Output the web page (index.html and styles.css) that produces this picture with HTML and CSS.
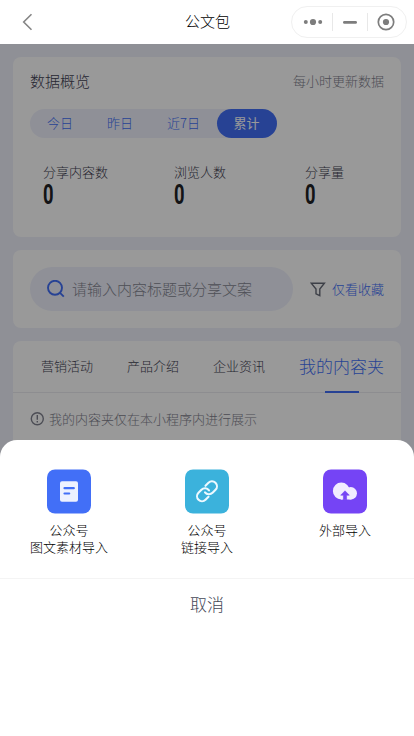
FILE: index.html
```html
<!DOCTYPE html>
<html lang="zh-CN">
<head>
<meta charset="utf-8">
<title>公文包</title>
<link rel="stylesheet" href="styles.css">
</head>
<body>
<header class="nav">
  <svg class="back" width="12" height="18" viewBox="0 0 12 18"><path d="M9.5 1.2 1.7 9l7.8 7.8"/></svg>
  <h1 class="nav-title">公文包</h1>
  <div class="capsule">
    <svg width="20" height="16" viewBox="0 0 20 16"><circle cx="2.8" cy="8" r="2"/><circle cx="10" cy="8" r="3.1"/><circle cx="17.2" cy="8" r="2"/></svg>
    <i class="sep"></i>
    <svg width="16" height="16" viewBox="0 0 16 16"><rect x="1" y="7" width="14" height="2.8" rx="1.4"/></svg>
    <i class="sep"></i>
    <svg width="18" height="18" viewBox="0 0 18 18"><circle class="ring" cx="9" cy="9" r="7.7"/><circle cx="9" cy="9" r="3.1"/></svg>
  </div>
</header>
<main class="page">
  <section class="card overview">
    <div class="card-head"><h2>数据概览</h2><span class="note">每小时更新数据</span></div>
    <div class="range"><span>今日</span><span>昨日</span><span>近7日</span><span class="on">累计</span></div>
    <div class="stats">
      <div><p>分享内容数</p><b>0</b></div>
      <div><p>浏览人数</p><b>0</b></div>
      <div><p>分享量</p><b>0</b></div>
    </div>
  </section>
  <section class="card search">
    <div class="field">
      <svg width="18" height="18" viewBox="0 0 18 18"><circle cx="8" cy="7.8" r="7"/><path d="M13 12.8 16.8 16.6"/></svg>
      <span>请输入内容标题或分享文案</span>
    </div>
    <div class="filter">
      <svg width="16" height="15" viewBox="0 0 16 15"><path d="M1.2 1.2h13.2L9.8 7v6.6L6 11.8V7z"/></svg>
      <span>仅看收藏</span>
    </div>
  </section>
  <section class="card folders">
    <nav class="tabs"><span>营销活动</span><span>产品介绍</span><span>企业资讯</span><span class="active">我的内容夹</span></nav>
    <div class="tip">
      <svg width="14" height="14" viewBox="0 0 14 14"><circle cx="7.3" cy="6.7" r="6"/><path d="M7.3 3v4.8M7.3 9v1.4"/></svg>
      <span>我的内容夹仅在本小程序内进行展示</span>
    </div>
  </section>
</main>
<div class="mask"></div>
<div class="sheet">
  <div class="actions">
    <div class="action">
      <svg width="44" height="45" viewBox="0 -.5 44 45"><rect width="44" height="44" rx="8" fill="#426ff7"/><rect x="13" y="11.7" width="18" height="20.6" rx="2" fill="#edf1ff"/><path d="M17.5 18.7h9.3M17.5 24h4.7" stroke="#426ff7" stroke-width="2.2" stroke-linecap="round"/></svg>
      <span>公众号<br>图文素材导入</span>
    </div>
    <div class="action">
      <svg width="44" height="45" viewBox="0 -.5 44 45"><rect width="44" height="44" rx="8" fill="#3bb2dc"/><g transform="translate(10 9.8)" fill="none" stroke="#edf9ff" stroke-width="2.1" stroke-linecap="round"><path d="M10 13a5 5 0 0 0 7.54.54l3-3a5 5 0 0 0-7.07-7.07l-3 3"/><path d="M14 11a5 5 0 0 0-7.54-.54l-3 3a5 5 0 0 0 7.07 7.07l3-3"/></g></svg>
      <span>公众号<br>链接导入</span>
    </div>
    <div class="action">
      <svg width="44" height="45" viewBox="0 -.5 44 45"><rect width="44" height="44" rx="8" fill="#7544f5"/><g fill="#f1ecff"><circle cx="18.3" cy="21.5" r="8.4"/><circle cx="27.8" cy="23.8" r="6.2"/><path d="M18 19h8.5l2 11H18z"/></g><path d="M22 21.3l4.3 4.4h-2.7v4.6h-3.2v-4.6h-2.7z" fill="#7544f5" stroke="#7544f5" stroke-width=".6" stroke-linejoin="round"/></svg>
      <span>外部导入</span>
    </div>
  </div>
  <div class="cancel">取消</div>
</div>
</body>
</html>
```
FILE: styles.css
```css
* { box-sizing: border-box; }
body { margin: 0; position: relative; height: 736px; overflow: hidden; font-family: "Noto Sans CJK SC", sans-serif; font-weight: 300; font-size: 13px; line-height: 17px; background: #eff0fa; color: #3f4152; }
h1, h2, p { margin: 0; font-weight: inherit; }
svg { display: block; flex: none; }
.nav { display: grid; grid-template-columns: 1fr 44px 1fr; align-items: center; height: 44px; padding: 0 7px; background: #fff; }
.back { margin-left: 15px; fill: none; stroke: #858585; stroke-width: 1.6; }
.nav-title { color: #000; font-size: 15px; line-height: 20px; padding-bottom: 2px; white-space: nowrap; }
.capsule { justify-self: end; width: 116px; height: 32px; border: 1px solid #f0f0f0; border-radius: 16px; display: flex; align-items: center; justify-content: space-between; padding: 0 11px; fill: #7d7d7d; }
.sep { width: 1px; height: 18px; background: #e8e8e8; }
.ring { fill: none; stroke: #7d7d7d; stroke-width: 1.7; }
.page { padding: 13px; display: flex; flex-direction: column; gap: 13px; }
.card { background: #fff; border-radius: 8px; }
.overview { height: 180px; padding: 13px 17px; }
.card-head { display: flex; justify-content: space-between; align-items: center; height: 21px; }
h2 { font-size: 15px; }
.note { color: #7f818e; }
.range { display: flex; width: 247px; height: 29px; margin-top: 18px; border-radius: 15px; background: #eff1fc; color: #426ff7; line-height: 27px; text-align: center; }
.range span { flex: 0 0 60px; height: 29px; }
.range span:nth-child(3) { flex-basis: 67px; }
.range .on { background: #426ff7; color: #fff; border-radius: 15px; font-weight: 400; text-indent: -1px; }
.stats { display: grid; grid-template-columns: 131px 131px auto; padding-left: 13px; margin-top: 25px; }
.stats b { display: block; width: 16px; color: #202226; font: 700 27px/30px Roboto, sans-serif; transform: scaleX(.68); transform-origin: left; }
.search { height: 78px; padding: 17px; display: flex; justify-content: space-between; align-items: center; }
.field { width: 263px; height: 44px; border-radius: 22px; background: #eff1fc; display: flex; align-items: center; gap: 7px; padding-left: 17px; font-size: 15px; color: #858792; }
.field span, .filter span { padding-bottom: 2px; }
.field svg { fill: none; stroke: #426ff7; stroke-width: 1.9; }
.filter { display: flex; align-items: center; gap: 6px; color: #426ff7; }
.filter svg { fill: none; stroke: #676b78; stroke-width: 1.4; }
.folders { height: 130px; }
.tabs { display: flex; justify-content: space-between; align-items: center; height: 52px; padding: 0 17px 0 28px; border-bottom: 1px solid #ececf0; }
.tabs span { padding-bottom: 2px; }
.tabs .active { position: relative; color: #426ff7; font-size: 17px; line-height: 49px; }
.active::after { content: ""; position: absolute; left: 26px; bottom: -1px; width: 34px; height: 2px; background: #426ff7; }
.tip { display: flex; align-items: center; gap: 5px; padding: 17px 17px 0; color: #7f818e; }
.tip svg { fill: none; stroke: #7f818e; stroke-width: 1.4; }
.mask { position: absolute; inset: 44px 0 0; background: rgba(0, 0, 0, .4); }
.sheet { position: absolute; inset: 440px 0 0; background: #fff; border-radius: 17px 17px 0 0; }
.actions { display: grid; grid-template-columns: repeat(3, 1fr); height: 139px; padding-top: 29px; border-bottom: 1px solid #f4f4f4; }
.action { display: flex; flex-direction: column; align-items: center; gap: 7px; color: #000; text-align: center; }
.cancel { font-size: 17px; line-height: 50px; text-align: center; color: #454857; }
```
